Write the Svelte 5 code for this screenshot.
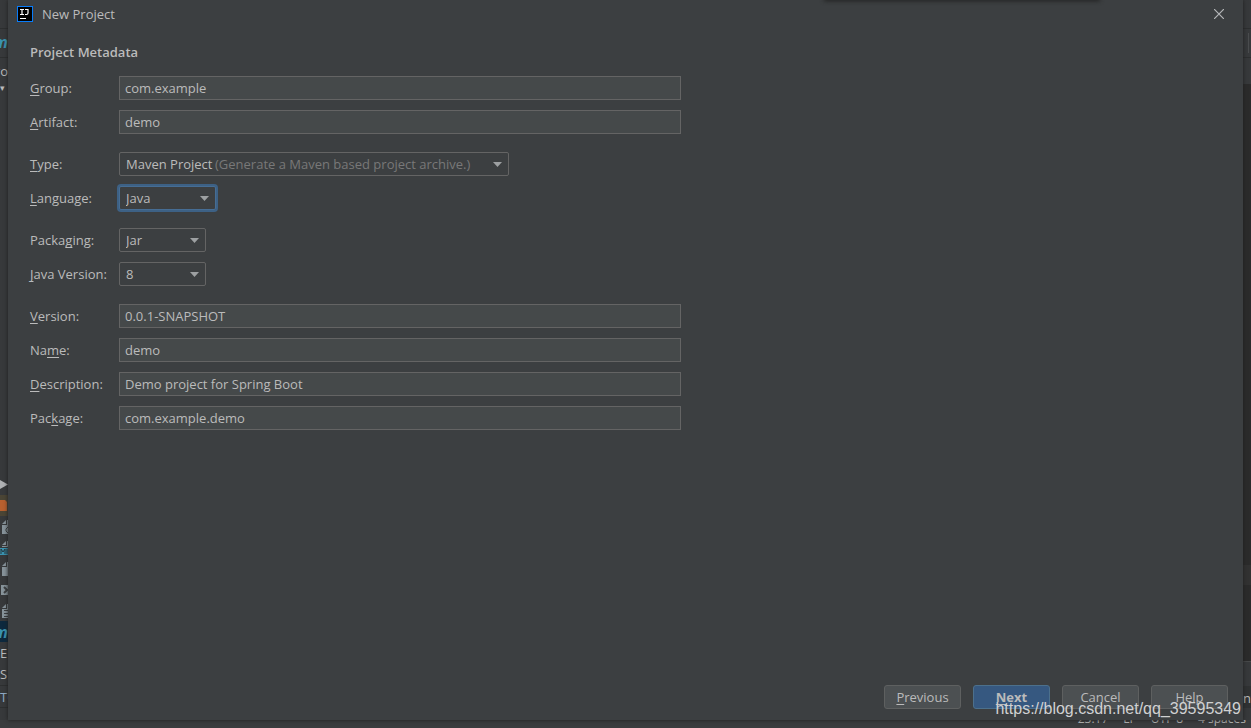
<script lang="ts">
	type Mnemonic = [before: string, key: string, after: string];
	type Field = {
		id: string;
		label: Mnemonic;
		kind: 'text' | 'select';
		size?: 'wide' | 'medium' | 'small';
		options?: string[];
		hint?: string;
		focused?: boolean;
	};

	const groups: Field[][] = [
		[
			{ id: 'group', label: ['', 'G', 'roup:'], kind: 'text' },
			{ id: 'artifact', label: ['', 'A', 'rtifact:'], kind: 'text' }
		],
		[
			{
				id: 'type',
				label: ['', 'T', 'ype:'],
				kind: 'select',
				size: 'wide',
				options: ['Maven Project', 'Gradle Project'],
				hint: '(Generate a Maven based project archive.)'
			},
			{
				id: 'language',
				label: ['', 'L', 'anguage:'],
				kind: 'select',
				size: 'medium',
				options: ['Java', 'Kotlin', 'Groovy'],
				focused: true
			}
		],
		[
			{ id: 'packaging', label: ['Packa', 'g', 'ing:'], kind: 'select', size: 'small', options: ['Jar', 'War'] },
			{ id: 'java', label: ['', 'J', 'ava Version:'], kind: 'select', size: 'small', options: ['8', '11', '14'] }
		],
		[
			{ id: 'version', label: ['', 'V', 'ersion:'], kind: 'text' },
			{ id: 'name', label: ['Na', 'm', 'e:'], kind: 'text' },
			{ id: 'description', label: ['', 'D', 'escription:'], kind: 'text' },
			{ id: 'package', label: ['Pac', 'k', 'age:'], kind: 'text' }
		]
	];

	let values: Record<string, string> = $state({
		group: 'com.example',
		artifact: 'demo',
		type: 'Maven Project',
		language: 'Java',
		packaging: 'Jar',
		java: '8',
		version: '0.0.1-SNAPSHOT',
		name: 'demo',
		description: 'Demo project for Spring Boot',
		package: 'com.example.demo'
	});

	const treeIcons = ['json', 'md', 'file', 'xml', 'text'];
</script>

<div class="ide">
	<div class="rail">
		<div class="bar"></div>
		<div class="bar maven">m</div>
		<div class="bar side">ro</div>
		<div class="caret">▾</div>
		<div class="spacer"></div>
		<div class="node">
			<svg width="8" height="9" viewBox="0 0 8 9"><path d="M0 0 8 4.5 0 9z" fill="#afb1b3" /></svg>
		</div>
		<div class="node target">
			<svg width="8" height="11" viewBox="0 0 8 11"><path d="M0 0h5l2 2v9H0z" fill="#b8602f" /></svg>
		</div>
		{#each treeIcons as icon}
			<div class="node">
				<svg width="8" height="15" viewBox="0 0 8 15">
					{#if icon === 'xml'}
						<path d="M1 3h7v10H1z" fill="#87939a" />
						<path d="m4 5 3 3-3 3" fill="none" stroke="#3c3f41" stroke-width="2" />
					{:else}
						<path d="M2 5 6 1v4zM7 1h1v5H7z" fill="#87939a" />
						{#if icon === 'md'}
							<path d="M2 6h6v1H2z" fill="#87939a" />
							<path d="M0 8h8v7H0z" fill="#3a93b0" />
							<path d="M1 14V9l2 3 2-3v5M7 9v5" fill="none" stroke="#27343b" />
						{:else}
							<path d="M2 6h6v9H2z" fill="#87939a" />
						{/if}
						{#if icon === 'text'}
							<path d="M4 7.500h4M4 10.500h4M4 13.500h4" stroke="#3c3f41" />
						{:else if icon === 'json'}
							<path d="M8 8 6 10v2l2 2" fill="none" stroke="#3c3f41" />
						{/if}
					{/if}
				</svg>
			</div>
		{/each}
		<div class="node maven selected">m</div>
		<div class="node">E</div>
		<div class="node">S</div>
		<div class="node todo">TO</div>
		<div class="foot"></div>
	</div>

	<main class="dialog">
		<header>
			<svg class="logo" width="16" height="16" viewBox="0 0 16 16">
				<path d="M0 0h16v16H0z" fill="#087cfa" />
				<path d="M1 1h14v14H1z" fill="#000" />
				<path d="M3 3.500h4M5 3v6M3 8.500h4M8 3.500h3V7q0 1.500-1.500 1.500H8" fill="none" stroke="#fff" stroke-width="1.200" />
				<path d="M3 12h6v1H3z" fill="#fff" />
			</svg>
			<span class="title">New Project</span>
			<button class="close" aria-label="Close">
				<svg width="10" height="10" viewBox="0 0 10 10">
					<path d="m0 0 10 10M10 0 0 10" stroke="#b5b7b9" stroke-width="1.200" />
				</svg>
			</button>
		</header>

		<form id="metadata" onsubmit={(e) => e.preventDefault()}>
			<h1>Project Metadata</h1>
			{#each groups as fields}
				<div class="group">
					{#each fields as field}
						<div class="field">
							<label for={field.id}>{field.label[0]}<u>{field.label[1]}</u>{field.label[2]}</label>
							{#if field.kind === 'text'}
								<input id={field.id} type="text" spellcheck="false" bind:value={values[field.id]} />
							{:else}
								<div class="combo {field.size}" class:focused={field.focused}>
									<select id={field.id} bind:value={values[field.id]}>
										{#each field.options ?? [] as option}
											<option value={option}>{option}</option>
										{/each}
									</select>
									{#if field.hint && values.type === 'Maven Project'}
										<span class="hint">{field.hint}</span>
									{/if}
									<svg class="arrow" width="9" height="5" viewBox="0 0 9 5"><path d="M0 0h9L4.500 5z" fill="#9da0a2" /></svg>
								</div>
							{/if}
						</div>
					{/each}
				</div>
			{/each}
		</form>

		<footer>
			<button type="button"><u>P</u>revious</button>
			<button type="submit" form="metadata" class="primary"><u>N</u>ext</button>
			<button type="button">Cancel</button>
			<button type="button">Help</button>
		</footer>
	</main>

	<div class="edge">
		<div class="bar"></div>
		<div class="bar tick"></div>
		<div class="tabs"></div>
		<div class="editor"></div>
		<div class="line"></div>
		<div class="editor low"></div>
		<div class="tools"></div>
		<div class="log">nt</div>
		<div class="foot"></div>
	</div>

	<div class="status">
		<span>23:17</span>
		<span>LF</span>
		<span>UTF-8</span>
		<span>4 spaces</span>
	</div>

	<div class="popup-shadow"></div>
	<div class="watermark">https://blog.csdn.net/qq_39595349</div>
</div>

<style>
	:global(body) {
		margin: 0;
		background: #3c3f41;
	}

	.ide {
		--panel: #3c3f41;
		--text: #bbbbbb;
		--line: #646464;
		position: relative;
		display: grid;
		grid-template-columns: 8px minmax(0, 1fr) 8px;
		grid-template-rows: 1fr 8px;
		min-height: 100vh;
		overflow: hidden;
		background: #37393b;
		color: var(--text);
		font: 13px/20px 'Open Sans', 'Noto Sans', sans-serif;
	}

	.rail,
	.edge {
		display: flex;
		flex-direction: column;
		min-width: 0;
		overflow: hidden;
		white-space: nowrap;
	}

	.bar {
		box-sizing: border-box;
		height: 29px;
		border-bottom: 1px solid #2d2f30;
		line-height: 26px;
	}

	.side {
		border-bottom: 0;
		direction: rtl;
	}

	.maven {
		direction: rtl;
		color: #3a93b0;
		font-size: 16px;
		font-style: italic;
		font-weight: 700;
	}

	.caret {
		font-size: 9px;
		line-height: 1px;
	}

	.spacer {
		flex: 1;
	}

	.node {
		display: flex;
		flex: none;
		align-items: center;
		height: 21px;
		line-height: 18px;
	}

	.target {
		background: #4b4535;
	}

	.selected {
		background: #0d293e;
	}

	.todo {
		margin-top: 1px;
		border-top: 1px solid #2d2f30;
		border-bottom: 1px solid #2d2f30;
		color: #8fa9c4;
	}

	.foot {
		flex: none;
		height: 12px;
	}

	.dialog {
		display: flex;
		flex-direction: column;
		background: var(--panel);
		box-shadow: 0 0 4px #1e1e1e;
		z-index: 1;
	}

	header {
		display: flex;
		align-items: center;
		height: 28px;
		padding: 0 19px 0 9px;
	}

	.title {
		flex: 1;
		padding-left: 9px;
	}

	.close {
		display: grid;
		place-items: center;
		width: 10px;
		height: 20px;
		padding: 0;
		border: 0;
		background: none;
	}

	form {
		display: flex;
		flex: 1;
		flex-direction: column;
		gap: 18px;
		padding: 14px 22px;
	}

	h1 {
		margin: 0 0 -4px;
		font-size: 13px;
		font-weight: 600;
		line-height: 20px;
	}

	.group {
		display: grid;
		gap: 10px;
	}

	.field {
		display: grid;
		grid-template-columns: 89px minmax(0, 562px);
		align-items: center;
		height: 24px;
	}

	u {
		text-underline-offset: 2px;
		text-decoration-skip-ink: none;
	}

	input,
	select {
		box-sizing: border-box;
		width: 100%;
		height: 24px;
		margin: 0;
		border: 1px solid var(--line);
		outline: 0;
		color: var(--text);
		font: inherit;
	}

	input {
		padding: 0 5px;
		background: #45494a;
	}

	.combo {
		display: grid;
		align-items: center;
	}

	.combo > * {
		grid-area: 1 / 1;
	}

	.wide {
		width: 390px;
	}

	.medium {
		width: 97px;
	}

	.small {
		width: 87px;
	}

	select {
		appearance: none;
		padding: 0 24px 0 6px;
		border-radius: 2px;
		background: var(--panel);
	}

	.focused select {
		border-color: #466d94;
		box-shadow: 0 0 0 2px #3d6185;
	}

	.hint {
		padding-left: 96px;
		color: #787878;
		pointer-events: none;
	}

	.arrow {
		justify-self: end;
		margin-right: 7px;
		pointer-events: none;
	}

	footer {
		display: flex;
		justify-content: flex-end;
		gap: 12px;
		padding: 0 15px 11px;
	}

	footer button {
		width: 77px;
		height: 24px;
		padding: 0;
		border: 1px solid #5e6060;
		border-radius: 3px;
		background: #4c5052;
		color: var(--text);
		font: inherit;
	}

	footer .primary {
		border-color: #4c708c;
		background: #365880;
		font-weight: 700;
	}

	.edge .tick {
		background: linear-gradient(#4b4d4f, #4b4d4f) 5px 4px / 1px 20px no-repeat;
	}

	.tabs {
		height: 26px;
	}

	.editor {
		flex: 1;
		background: #2b2b2b;
	}

	.line {
		height: 20px;
		background: #323232;
	}

	.low {
		flex: none;
		height: 76px;
	}

	.tools {
		height: 24px;
		border-top: 1px solid #47494a;
	}

	.log {
		height: 22px;
		background: #303233;
		line-height: 24px;
	}

	.status {
		display: flex;
		grid-column: 1 / -1;
		align-items: flex-end;
		justify-content: flex-end;
		gap: 15px;
		overflow: hidden;
		padding: 0 5px 0 0;
		background: #3a3c3e;
		font-size: 12px;
		line-height: 18px;
	}

	.popup-shadow {
		position: absolute;
		top: -4px;
		right: 151px;
		width: 276px;
		height: 4px;
		box-shadow: 0 1px 4px #202020;
		z-index: 2;
	}

	.watermark {
		position: absolute;
		right: 10px;
		bottom: 9px;
		color: #d0d1d2;
		font: 16px/20px 'Liberation Sans', Arial, sans-serif;
		pointer-events: none;
		z-index: 2;
	}
</style>
